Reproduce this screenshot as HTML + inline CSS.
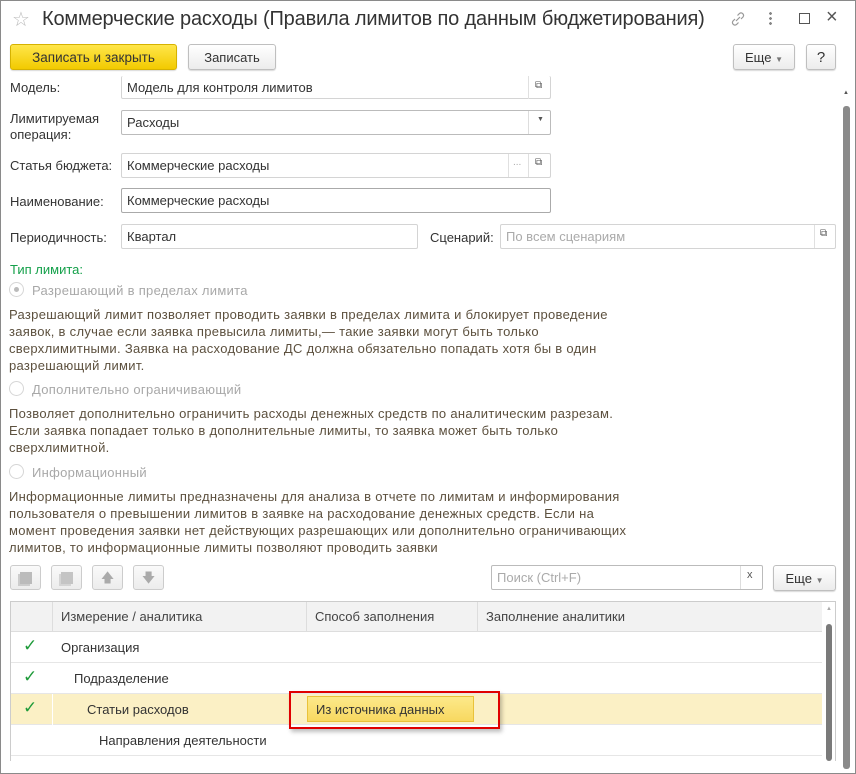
<!DOCTYPE html>
<html><head><meta charset="utf-8"><style>
*{box-sizing:border-box;margin:0;padding:0}
body{width:856px;height:774px;background:#fff;font-family:"Liberation Sans",Arial,sans-serif;font-size:13px;color:#333;position:relative;overflow:hidden;letter-spacing:0}
.a{position:absolute;white-space:nowrap}
.fld{position:absolute;border:1px solid #d4d4d4;border-radius:2px;background:#fff;height:25px;padding:4px 0 0 5px;color:#333}
.btn{position:absolute;border:1px solid #bfbfbf;border-radius:3px;background:linear-gradient(#fff,#ececec);box-shadow:0 1px 1px rgba(0,0,0,.15);text-align:center;color:#333}
.desc{color:#5c503e;letter-spacing:0.3px}
.radio{position:absolute;width:15px;height:15px;border:1px solid #d6d6d6;border-radius:50%;background:#fff}
.rl{color:#a8a8a8}
.tb{position:absolute;width:31px;height:25px;border:1px solid #ccc;border-radius:3px;background:linear-gradient(#fafafa,#ececec)}
.row{position:absolute;left:11px;width:811px;height:31px;border-bottom:1px solid #e6e6e6}
.chk{position:absolute;left:12px;top:4px;color:#1f9b3a;font-size:17px}
</style></head><body>
<div class="a" style="left:0;top:0;width:856px;height:774px;border:1px solid #8a8a8a"></div>
<div class="a" style="left:12px;top:7px;font-size:20px;color:#bbb">☆</div>
<div class="a" style="left:42px;top:8px;font-size:20px;color:#333;letter-spacing:-0.17px">Коммерческие расходы (Правила лимитов по данным бюджетирования)</div>
<svg class="a" style="left:730px;top:10px" width="16" height="18" viewBox="0 0 16 18"><path d="M6 11l4-4M5 9l-2 2a2.5 2.5 0 003.5 3.5l2-2M11 9l2-2a2.5 2.5 0 00-3.5-3.5l-2 2" stroke="#999" fill="none" stroke-width="1.2"/></svg>
<div class="a" style="left:769px;top:11px;width:3px;height:14px;background:radial-gradient(circle,#888 1.3px,transparent 1.5px) 0 0/3px 5px"></div>
<div class="a" style="left:799px;top:13px;width:11px;height:11px;border:1.5px solid #555"></div>
<div class="a" style="left:826px;top:6px;font-size:20px;color:#555">×</div>

<div class="btn" style="left:10px;top:44px;width:167px;height:26px;background:linear-gradient(#ffe64a,#f2ca00);border-color:#d6b200;padding-top:5px;color:#333;font-size:13.5px">Записать и закрыть</div>
<div class="btn" style="left:188px;top:44px;width:88px;height:26px;padding-top:5px">Записать</div>
<div class="btn" style="left:733px;top:44px;width:62px;height:26px;padding-top:5px">Еще <span style="font-size:8px;color:#777">▼</span></div>
<div class="btn" style="left:806px;top:44px;width:30px;height:26px;padding-top:4px;font-size:15px">?</div>

<div class="a" style="left:10px;top:80px">Модель:</div>
<div class="fld" style="left:121px;top:76px;width:430px;height:23px;border-top:none;padding-top:4px">Модель для контроля лимитов</div>
<div class="a" style="left:528px;top:76px;width:1px;height:23px;background:#e0e0e0"></div>
<div class="a" style="left:535px;top:80px;font-size:10px;color:#555">⧉</div>

<div class="a" style="left:10px;top:111px;line-height:16px">Лимитируемая<br>операция:</div>
<div class="fld" style="left:121px;top:110px;width:430px;border-color:#bbb">Расходы</div>
<div class="a" style="left:528px;top:111px;width:1px;height:23px;background:#ddd"></div>
<div class="a" style="left:537px;top:116px;font-size:7px;color:#555">▼</div>

<div class="a" style="left:10px;top:158px">Статья бюджета:</div>
<div class="fld" style="left:121px;top:153px;width:430px">Коммерческие расходы</div>
<div class="a" style="left:508px;top:154px;width:1px;height:23px;background:#e0e0e0"></div>
<div class="a" style="left:513px;top:157px;color:#aaa;font-size:10px">...</div>
<div class="a" style="left:528px;top:154px;width:1px;height:23px;background:#e0e0e0"></div>
<div class="a" style="left:535px;top:157px;font-size:10px;color:#555">⧉</div>

<div class="a" style="left:10px;top:194px">Наименование:</div>
<div class="fld" style="left:121px;top:188px;width:430px;border-color:#aaa">Коммерческие расходы</div>

<div class="a" style="left:10px;top:230px">Периодичность:</div>
<div class="fld" style="left:121px;top:224px;width:297px">Квартал</div>
<div class="a" style="left:430px;top:230px">Сценарий:</div>
<div class="fld" style="left:500px;top:224px;width:336px;color:#aaa">По всем сценариям</div>
<div class="a" style="left:814px;top:225px;width:1px;height:23px;background:#e0e0e0"></div>
<div class="a" style="left:820px;top:228px;font-size:10px;color:#555">⧉</div>

<div class="a" style="left:10px;top:262px;color:#14a04a">Тип лимита:</div>
<div class="radio" style="left:9px;top:282px"><div style="position:absolute;left:4px;top:4px;width:5px;height:5px;border-radius:50%;background:#bbb"></div></div>
<div class="a rl" style="left:32px;top:283px;letter-spacing:0.3px">Разрешающий в пределах лимита</div>
<div class="a desc" style="left:9px;top:306px;line-height:17px">Разрешающий лимит позволяет проводить заявки в пределах лимита и блокирует проведение<br>заявок, в случае если заявка превысила лимиты,— такие заявки могут быть только<br>сверхлимитными. Заявка на расходование ДС должна обязательно попадать хотя бы в один<br>разрешающий лимит.</div>
<div class="radio" style="left:9px;top:381px"></div>
<div class="a rl" style="left:32px;top:382px;letter-spacing:0.3px">Дополнительно ограничивающий</div>
<div class="a desc" style="left:9px;top:405px;line-height:17px">Позволяет дополнительно ограничить расходы денежных средств по аналитическим разрезам.<br>Если заявка попадает только в дополнительные лимиты, то заявка может быть только<br>сверхлимитной.</div>
<div class="radio" style="left:9px;top:464px"></div>
<div class="a rl" style="left:32px;top:465px;letter-spacing:0.3px">Информационный</div>
<div class="a desc" style="left:9px;top:488px;line-height:17px">Информационные лимиты предназначены для анализа в отчете по лимитам и информирования<br>пользователя о превышении лимитов в заявке на расходование денежных средств. Если на<br>момент проведения заявки нет действующих разрешающих или дополнительно ограничивающих<br>лимитов, то информационные лимиты позволяют проводить заявки</div>

<div class="tb" style="left:10px;top:565px"><div style="position:absolute;left:9px;top:6px;width:12px;height:12px;background:#bbb;box-shadow:-2px 2px 0 #ccc"></div></div>
<div class="tb" style="left:51px;top:565px"><div style="position:absolute;left:9px;top:6px;width:12px;height:12px;background:#c4c4c4;box-shadow:-2px 2px 0 #d4d4d4"></div></div>
<div class="tb" style="left:92px;top:565px;color:#aaa;text-align:center;font-size:13px;padding-top:3px">🡅</div>
<div class="tb" style="left:133px;top:565px;color:#aaa;text-align:center;font-size:13px;padding-top:3px">🡇</div>
<div class="fld" style="left:491px;top:565px;width:272px;color:#aaa;border-color:#bbb">Поиск (Ctrl+F)</div>
<div class="a" style="left:740px;top:566px;width:1px;height:23px;background:#ddd"></div>
<div class="a" style="left:747px;top:569px;font-size:11px;color:#555">x</div>
<div class="btn" style="left:773px;top:565px;width:63px;height:26px;padding-top:5px">Еще <span style="font-size:8px;color:#777">▼</span></div>

<div class="a" style="left:10px;top:601px;width:826px;height:160px;border:1px solid #ccc;border-bottom:none"></div>
<div class="a" style="left:11px;top:602px;width:811px;height:30px;background:#f2f2f2;border-bottom:1px solid #ddd"></div>
<div class="a" style="left:52px;top:602px;width:1px;height:30px;background:#ddd"></div>
<div class="a" style="left:306px;top:602px;width:1px;height:30px;background:#ddd"></div>
<div class="a" style="left:477px;top:602px;width:1px;height:30px;background:#ddd"></div>
<div class="a" style="left:61px;top:609px;color:#444">Измерение / аналитика</div>
<div class="a" style="left:315px;top:609px;color:#444">Способ заполнения</div>
<div class="a" style="left:486px;top:609px;color:#444">Заполнение аналитики</div>
<div class="row" style="top:632px"><span class="chk">✓</span><span class="a" style="left:50px;top:8px">Организация</span></div>
<div class="row" style="top:663px"><span class="chk">✓</span><span class="a" style="left:63px;top:8px">Подразделение</span></div>
<div class="row" style="top:694px;background:#fbf0c5"><span class="chk">✓</span><span class="a" style="left:41px;top:0;width:1px;height:31px;background:#fff"></span><span class="a" style="left:76px;top:8px">Статьи расходов</span></div>
<div class="row" style="top:725px"><span class="a" style="left:88px;top:8px">Направления деятельности</span></div>
<div class="a" style="left:307px;top:696px;width:167px;height:26px;background:linear-gradient(#fce98a,#f8d860);border:1px solid #e9c23a;padding:5px 0 0 8px">Из источника данных</div>
<div class="a" style="left:289px;top:691px;width:211px;height:38px;border:2px solid #e00000;box-shadow:2px 3px 4px rgba(0,0,0,.25)"></div>
<div class="a" style="left:826px;top:624px;width:6px;height:137px;background:#7a7a7a;border-radius:3px"></div>
<div class="a" style="left:826px;top:606px;font-size:6px;color:#aaa">▲</div>

<div class="a" style="left:843px;top:90px;font-size:6px;color:#555">▲</div>
<div class="a" style="left:843px;top:106px;width:7px;height:663px;background:#8a8a8a;border-radius:3px"></div>
</body></html>
